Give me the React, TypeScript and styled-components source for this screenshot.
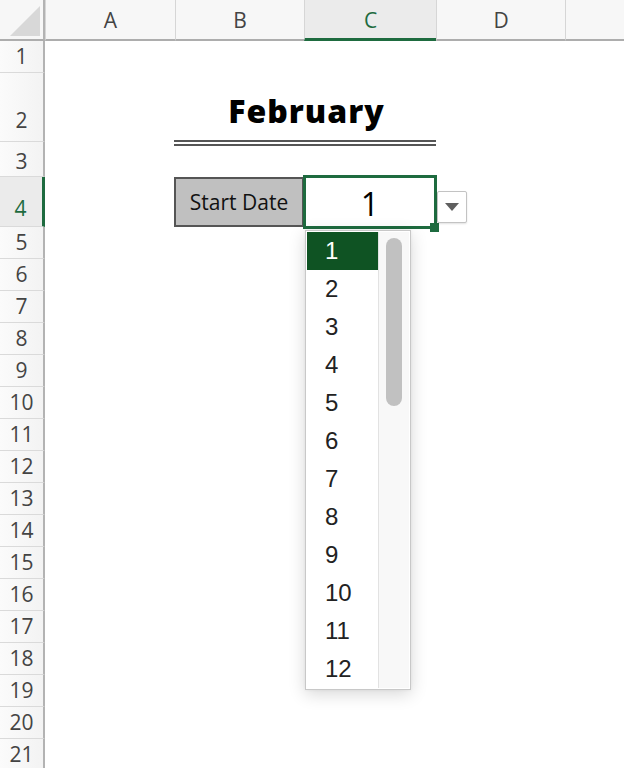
import React from "react";
import styled, { createGlobalStyle } from "styled-components";

const GlobalStyle = createGlobalStyle`
  html, body {
    margin: 0;
    padding: 0;
    background: #ffffff;
  }
  body {
    width: 624px;
    height: 768px;
    overflow: hidden;
    font-family: "Open Sans", "Liberation Sans", sans-serif;
  }
`;

const GREEN = "#1e6b3f";
const LIST_GREEN = "#0f5323";

type ColDef = { label: string; width: number; active?: boolean };
type RowDef = { n: number; h: number; pad: number; active?: boolean };

const COLS: ColDef[] = [
  { label: "A", width: 130 },
  { label: "B", width: 129 },
  { label: "C", width: 132, active: true },
  { label: "D", width: 129 },
  { label: "", width: 59 },
];

const ROWS: RowDef[] = [
  { n: 1, h: 32, pad: 4 },
  { n: 2, h: 69, pad: 9 },
  { n: 3, h: 35, pad: 3 },
  { n: 4, h: 50, pad: 6, active: true },
  ...Array.from({ length: 17 }, (_, i) => ({ n: i + 5, h: 32, pad: 4 })),
];

const DAYS = Array.from({ length: 12 }, (_, i) => i + 1);

const Page = styled.div`
  width: 624px;
  height: 768px;
  overflow: hidden;
  display: flex;
  flex-direction: column;
`;

const HeaderBar = styled.div`
  display: flex;
  height: 41px;
  flex-shrink: 0;
`;

const Corner = styled.div`
  width: 45px;
  height: 41px;
  box-sizing: border-box;
  background: #f7f7f7;
  border-right: 2px solid #b3b3b3;
  border-bottom: 2px solid #adadad;
  display: flex;
  align-items: flex-start;
  justify-content: flex-end;
  padding: 6px 3px 0 0;
`;

const ColHead = styled.div<{ $w: number; $active?: boolean }>`
  width: ${(p) => p.$w}px;
  flex-shrink: 0;
  height: 41px;
  box-sizing: border-box;
  background: ${(p) => (p.$active ? "#ebebeb" : "#f7f7f7")};
  border-left: 1px solid #d6d6d6;
  border-bottom: ${(p) => (p.$active ? `3px solid ${GREEN}` : "2px solid #adadad")};
  display: flex;
  align-items: center;
  justify-content: center;
  padding-top: ${(p) => (p.$active ? 1 : 0)}px;
  font-size: 21px;
  line-height: 24px;
  color: ${(p) => (p.$active ? GREEN : "#444444")};
  &:first-child {
    border-left: none;
  }
`;

const Body = styled.div`
  display: flex;
  flex: 1;
`;

const RowHeads = styled.div`
  width: 45px;
  flex-shrink: 0;
  display: flex;
  flex-direction: column;
`;

const RowHead = styled.div<{ $h: number; $pad: number; $active?: boolean }>`
  height: ${(p) => p.$h}px;
  flex-shrink: 0;
  box-sizing: border-box;
  background: ${(p) => (p.$active ? "#ebebeb" : "linear-gradient(90deg, #fbfbfb, #f3f3f3)")};
  border-right: ${(p) => (p.$active ? `3px solid ${GREEN}` : "2px solid #b3b3b3")};
  border-bottom: 1px solid #dadada;
  display: flex;
  align-items: flex-end;
  justify-content: center;
  padding: 0 ${(p) => (p.$active ? 1 : 0)}px ${(p) => p.$pad}px 0;
  font-size: 21px;
  line-height: 24px;
  color: ${(p) => (p.$active ? GREEN : "#444444")};
`;

const Sheet = styled.div`
  flex: 1;
  display: grid;
  grid-template-columns: 130px 129px 132px 129px 59px;
  grid-template-rows: 32px 73px 31px 50px 1fr;
`;

const Title = styled.div`
  grid-column: 2 / 4;
  grid-row: 2;
  margin-left: -1px;
  border-bottom: 6px double #555555;
  display: flex;
  align-items: flex-end;
  justify-content: center;
  padding: 0 0 9px 3px;
  font-size: 32px;
  line-height: 40px;
  font-weight: 800;
  color: #000000;
  letter-spacing: 1px;
`;

const LabelCell = styled.div`
  grid-column: 2;
  grid-row: 4;
  margin-left: -1px;
  box-sizing: border-box;
  background: #c0c0c0;
  border: 2px solid #555555;
  display: flex;
  align-items: center;
  justify-content: center;
  font-size: 21px;
  color: #111111;
`;

const ActiveCell = styled.div`
  grid-column: 3;
  grid-row: 4;
  position: relative;
  z-index: 2;
  margin: -2px -1px;
  box-sizing: border-box;
  border: 3px solid ${GREEN};
  background: #ffffff;
  display: flex;
  align-items: center;
  justify-content: center;
  padding-top: 4px;
  font-size: 32px;
  font-weight: 500;
  line-height: 40px;
  color: #000000;
`;

const FillHandle = styled.span`
  position: absolute;
  right: -5px;
  bottom: -6px;
  width: 9px;
  height: 9px;
  background: ${GREEN};
`;

const DropButton = styled.div`
  grid-column: 4;
  grid-row: 4;
  align-self: end;
  justify-self: start;
  width: 30px;
  height: 32px;
  margin: 0 0 4px 1px;
  box-sizing: border-box;
  background: #ffffff;
  border: 1px solid #c3c3c3;
  border-radius: 2px;
  box-shadow: 0 1px 2px rgba(0, 0, 0, 0.12);
  display: flex;
  align-items: center;
  justify-content: center;
  position: relative;
  z-index: 2;
`;

const ListBox = styled.div`
  position: absolute;
  left: -1px;
  top: 52px;
  width: 106px;
  height: 460px;
  box-sizing: border-box;
  padding: 1px;
  background: #ffffff;
  border: 1px solid #c8c8c8;
  box-shadow: 0 4px 16px rgba(0, 0, 0, 0.16), 0 0 3px rgba(0, 0, 0, 0.06);
  display: flex;
`;

const Items = styled.div`
  width: 71px;
  display: flex;
  flex-direction: column;
`;

const Item = styled.div<{ $selected?: boolean }>`
  height: 38px;
  flex-shrink: 0;
  display: flex;
  align-items: center;
  padding-left: 18px;
  background: ${(p) => (p.$selected ? LIST_GREEN : "#ffffff")};
  color: ${(p) => (p.$selected ? "#ffffff" : "#222222")};
  font-family: "Liberation Sans", Arial, sans-serif;
  font-size: 24px;
  font-weight: 400;
`;

const Track = styled.div`
  flex: 1;
  background: #f8f8f8;
  border-left: 1px solid #e2e2e2;
  padding: 6px 0 0 7px;
`;

const Thumb = styled.div`
  width: 16px;
  height: 168px;
  border-radius: 8px;
  background: #c1c1c1;
`;

export default function App() {
  return (
    <Page>
      <GlobalStyle />
      <HeaderBar>
        <Corner>
          <svg width="30" height="30" viewBox="0 0 30 30">
            <polygon points="30,0 30,30 0,30" fill="#d8d8d8" />
          </svg>
        </Corner>
        {COLS.map((c, i) => (
          <ColHead key={i} $w={c.width} $active={c.active}>
            {c.label}
          </ColHead>
        ))}
      </HeaderBar>
      <Body>
        <RowHeads>
          {ROWS.map((r) => (
            <RowHead key={r.n} $h={r.h} $pad={r.pad} $active={r.active}>
              {r.n}
            </RowHead>
          ))}
        </RowHeads>
        <Sheet>
          <Title>February</Title>
          <LabelCell>Start Date</LabelCell>
          <ActiveCell>
            1
            <FillHandle />
            <ListBox>
              <Items>
                {DAYS.map((d) => (
                  <Item key={d} $selected={d === 1}>
                    {d}
                  </Item>
                ))}
              </Items>
              <Track>
                <Thumb />
              </Track>
            </ListBox>
          </ActiveCell>
          <DropButton>
            <svg width="14" height="8" viewBox="0 0 14 8">
              <polygon points="0,0 14,0 7,8" fill="#5f5f5f" />
            </svg>
          </DropButton>
        </Sheet>
      </Body>
    </Page>
  );
}
